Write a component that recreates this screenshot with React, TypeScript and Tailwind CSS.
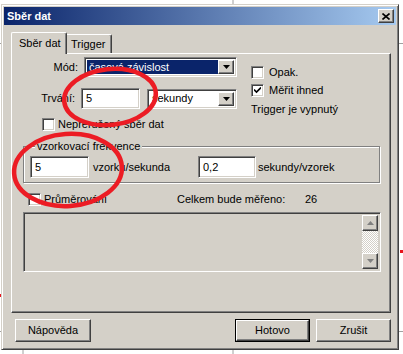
import React from "react";

const raised =
  "border-t border-l border-t-white border-l-white border-r border-b border-r-[#404040] border-b-[#404040] shadow-[inset_-1px_-1px_#808080]";
const sunken =
  "border-t border-l border-t-[#808080] border-l-[#808080] border-r border-b border-r-white border-b-white shadow-[inset_1px_1px_#404040,inset_-1px_-1px_#d4d0c8]";

const Arrow = ({ up = false }: { up?: boolean }) => (
  <svg width="7" height="4" viewBox="0 0 7 4" className={up ? "rotate-180" : ""}>
    <path d="M0 0h7L3.5 4z" fill="#000" />
  </svg>
);

const Checkbox = ({ checked = false }: { checked?: boolean }) => (
  <div className={`w-[13px] h-[13px] bg-white shrink-0 flex items-center justify-center ${sunken}`}>
    {checked && (
      <svg width="7" height="7" viewBox="0 0 7 7">
        <path d="M0 2.5l2.5 2.5L7 0.5" stroke="#000" strokeWidth="1.6" fill="none" />
      </svg>
    )}
  </div>
);

const Select = ({ value, width, selected = false }: { value: string; width: string; selected?: boolean }) => (
  <div className={`${width} h-[20px] bg-white flex items-center p-[2px] ${sunken}`}>
    <div
      className={`flex-1 h-full flex items-center pl-[2px] ${
        selected ? "bg-[#0a246a] text-white" : "text-black"
      }`}
    >
      {value}
    </div>
    <div className={`w-[16px] h-full bg-[#d4d0c8] flex items-center justify-center ${raised}`}>
      <Arrow />
    </div>
  </div>
);

const Field = ({ value, width, height = "h-[21px]" }: { value: string; width: string; height?: string }) => (
  <div className={`${width} ${height} bg-white flex items-center pl-[4px] ${sunken}`}>{value}</div>
);

const Button = ({ label, def = false, className = "" }: { label: string; def?: boolean; className?: string }) => (
  <div className={`w-[75px] h-[23px] ${def ? "border border-black" : ""} ${className}`}>
    <div className={`w-full h-full flex items-center justify-center bg-[#d4d0c8] ${raised}`}>{label}</div>
  </div>
);

export default function App() {
  return (
    <div className="relative w-[403px] h-[354px] bg-white overflow-hidden font-['Liberation_Sans',Arial,sans-serif] text-[11px] leading-[13px] text-black">
      {/* sheet behind the dialog */}
      <svg className="absolute inset-0" width="403" height="354">
        <path d="M233 0v4M233 350v4M23 350v4M0 43.5h2M399 43.5h4M0 331.5h2M399 331.5h4" stroke="#a0a0a0" />
        <rect x="0" y="294" width="2" height="3" fill="#e8141c" />
        <rect x="400" y="250" width="3" height="3" fill="#e8141c" />
      </svg>

      <div className="relative ml-[1px] mt-[4px] w-[398px] h-[346px] bg-[#d4d0c8] p-[2px] border-t border-l border-t-[#d4d0c8] border-l-[#d4d0c8] border-r border-b border-r-[#404040] border-b-[#404040] shadow-[inset_1px_1px_white,inset_-1px_-1px_#808080]">
        {/* title bar */}
        <div className="h-[18px] flex items-center justify-between pl-[3px] pr-[2px] bg-[linear-gradient(to_right,#0a246a,#a6caf0)]">
          <span className="text-white font-bold">Sběr dat</span>
          <div className={`w-[16px] h-[14px] bg-[#d4d0c8] flex items-center justify-center ${raised}`}>
            <svg width="8" height="7" viewBox="0 0 8 7">
              <path d="M0.5 0.5l7 6M7.5 0.5l-7 6" stroke="#000" strokeWidth="1.6" />
            </svg>
          </div>
        </div>

        {/* tabs */}
        <div className="mt-[7px] ml-[7px] flex items-end -mb-[1px] relative z-10">
          <div className="w-[56px] h-[22px] bg-[#d4d0c8] flex items-start pl-[7px] pt-[4px] border-t border-l border-t-white border-l-white border-r border-r-[#404040] shadow-[inset_-1px_0_#808080] rounded-t-[2px]">
            Sběr dat
          </div>
          <div className="w-[45px] h-[19px] mb-[1px] flex items-start pl-[4px] pt-[3px] border-t border-t-white border-r border-r-[#404040] shadow-[inset_-1px_0_#808080] rounded-tr-[2px]">
            Trigger
          </div>
        </div>

        {/* tab panel */}
        <div className={`ml-[7px] w-[380px] h-[260px] ${raised}`}>
          <div className="flex">
            <div>
              <div className="mt-[3px] flex items-center">
                <span className="w-[66px] text-right">Mód:</span>
                <div className="ml-[6px]">
                  <Select value="časová závislost" width="w-[153px]" selected />
                </div>
              </div>
              <div className="mt-[11px] flex items-center">
                <span className="w-[63px] text-right">Trvání:</span>
                <div className="ml-[6px]">
                  <Field value="5" width="w-[59px]" />
                </div>
                <div className="ml-[7px]">
                  <Select value="sekundy" width="w-[90px]" />
                </div>
              </div>
              <div className="mt-[9px] ml-[30px] flex items-center">
                <Checkbox />
                <span className="ml-[3px]">Nepřerušený sběr dat</span>
              </div>
            </div>
            <div className="ml-[14px] mt-[12px]">
              <div className="flex items-center">
                <Checkbox />
                <span className="ml-[5px]">Opak.</span>
              </div>
              <div className="mt-[5px] flex items-center">
                <Checkbox checked />
                <span className="ml-[5px]">Měřit ihned</span>
              </div>
              <div className="mt-[6px]">Trigger je vypnutý</div>
            </div>
          </div>

          <fieldset className="mt-[9px] ml-[11px] w-[357px] pl-[6px] pt-[3px] pb-[4px] border border-[#808080] shadow-[inset_1px_1px_white,1px_1px_white]">
            <legend className="ml-[5px] px-[2px] bg-[#d4d0c8]">vzorkovací frekvence</legend>
            <div className="flex items-center">
              <Field value="5" width="w-[59px]" height="h-[22px]" />
              <span className="ml-[4px] w-[105px]">vzorku/sekunda</span>
              <Field value="0,2" width="w-[58px]" height="h-[22px]" />
              <span className="ml-[2px]">sekundy/vzorek</span>
            </div>
          </fieldset>

          <div className="mt-[10px] ml-[16px] flex items-center">
            <Checkbox />
            <span className="ml-[3px] w-[133px]">Průměrování</span>
            <span className="w-[128px]">Celkem bude měřeno:</span>
            <span>26</span>
          </div>

          <div className={`mt-[6px] ml-[11px] w-[358px] h-[60px] flex justify-end p-[2px] ${sunken}`}>
            <div className="w-[16px] h-full flex flex-col">
              <div className={`h-[16px] bg-[#d4d0c8] flex items-center justify-center ${raised}`}>
                <svg width="7" height="4" viewBox="0 0 7 4">
                  <path d="M0 4h7L3.5 0z" fill="#808080" />
                </svg>
              </div>
              <div className="flex-1 bg-[repeating-conic-gradient(#d4d0c8_0_25%,#ffffff_0_50%)] bg-[length:2px_2px]" />
              <div className={`h-[16px] bg-[#d4d0c8] flex items-center justify-center ${raised}`}>
                <svg width="7" height="4" viewBox="0 0 7 4">
                  <path d="M0 0h7L3.5 4z" fill="#808080" />
                </svg>
              </div>
            </div>
          </div>
        </div>

        {/* buttons */}
        <div className="mt-[6px] flex">
          <Button label="Nápověda" className="ml-[11px] w-[76px]" />
          <Button label="Hotovo" def className="ml-[144px]" />
          <Button label="Zrušit" className="ml-[6px]" />
        </div>
      </div>

      {/* red annotation rings */}
      <svg className="absolute inset-0 pointer-events-none" width="403" height="354">
        <ellipse cx="110" cy="97" rx="46" ry="28" transform="rotate(-6 110 97)" fill="none" stroke="#ec1c24" strokeWidth="4.5" />
        <ellipse cx="68" cy="170" rx="54" ry="36" transform="rotate(-4 68 170)" fill="none" stroke="#ec1c24" strokeWidth="4.5" />
      </svg>
    </div>
  );
}
